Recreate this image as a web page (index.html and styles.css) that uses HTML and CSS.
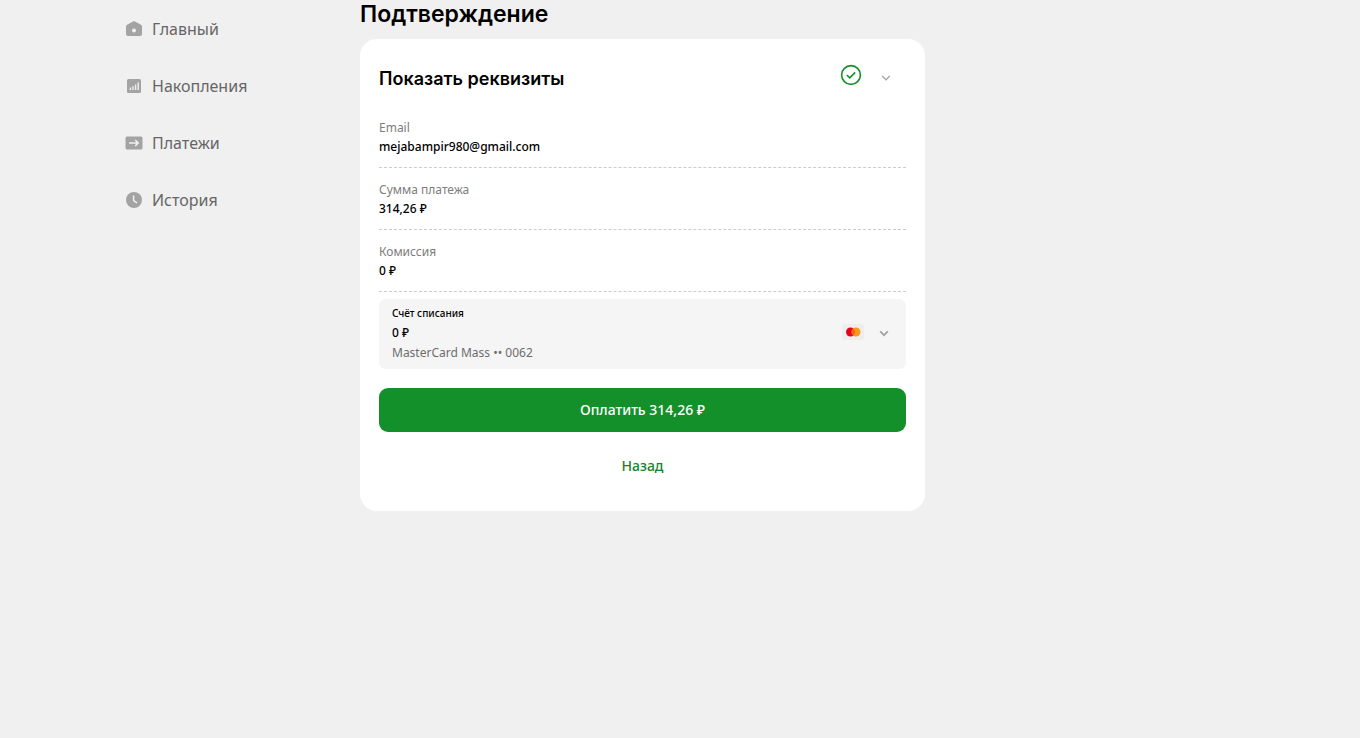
FILE: index.html
```html
<!DOCTYPE html>
<html lang="ru">
<head>
    <meta charset="UTF-8">
    <meta name="viewport" content="width=device-width, initial-scale=1">
    <title>Подтверждение</title>
    <link rel="stylesheet" href="styles.css">
</head>
<body>
<div class="container">
    <nav class="menu">
        <a class="menu_item" href="#">
            <svg class="menu_icon" viewBox="0 0 18 18">
                <path fill="#a3a3a3" fill-rule="evenodd" d="M9 1 16 4.8Q17 5.4 17 6.6V14Q17 16 15 16H3Q1 16 1 14V6.6Q1 5.4 2 4.8ZM9 8.4A2 2 0 1 0 9 12.4 2 2 0 1 0 9 8.4Z"/>
            </svg>
            <span>Главный</span>
        </a>
        <a class="menu_item" href="#">
            <svg class="menu_icon" viewBox="0 0 18 18">
                <rect x="2" y="2" width="14" height="14" rx="1.5" fill="#a3a3a3"/>
                <path stroke="#f0f0f0" stroke-width="1.4" d="M5.4 13V10.6M8 13V9.2M10.6 13V7.4M13.2 13V5.4"/>
            </svg>
            <span>Накопления</span>
        </a>
        <a class="menu_item" href="#">
            <svg class="menu_icon" viewBox="0 0 18 18">
                <rect x="0.5" y="2.5" width="17" height="13" rx="1.5" fill="#a3a3a3"/>
                <path fill="none" stroke="#f0f0f0" stroke-width="1.6" d="M4 9H13.2M10.2 6 13.2 9 10.2 12"/>
            </svg>
            <span>Платежи</span>
        </a>
        <a class="menu_item" href="#">
            <svg class="menu_icon" viewBox="0 0 18 18">
                <circle cx="9" cy="9" r="8" fill="#a3a3a3"/>
                <path fill="none" stroke="#f0f0f0" stroke-width="1.5" d="M8.6 4.4V9.6L12 11.8"/>
            </svg>
            <span>История</span>
        </a>
    </nav>
    <main class="content">
        <h1 class="title">Подтверждение</h1>
        <section class="card">
            <div class="card_head">
                <h2 class="card_title">Показать реквизиты</h2>
                <svg class="status_icon" viewBox="0 0 22 22">
                    <circle cx="11" cy="11" r="9.4" fill="none" stroke="#13902a" stroke-width="1.6"/>
                    <path fill="none" stroke="#13902a" stroke-width="1.6" d="M6.8 11 9.8 13.9 15.2 8.4"/>
                </svg>
                <button class="toggle_btn" type="button" aria-label="Показать реквизиты">
                    <svg class="arrow_icon" viewBox="0 0 10 10">
                        <path fill="none" stroke="#aaa" stroke-width="1.5" d="M1.2 3 5 6.8 8.8 3"/>
                    </svg>
                </button>
            </div>
            <dl class="details">
                <div class="row">
                    <dt>Email</dt>
                    <dd>mejabampir980@gmail.com</dd>
                </div>
                <div class="row">
                    <dt>Сумма платежа</dt>
                    <dd>314,26 ₽</dd>
                </div>
                <div class="row">
                    <dt>Комиссия</dt>
                    <dd>0 ₽</dd>
                </div>
            </dl>
            <button class="account" type="button" aria-haspopup="listbox">
                <span class="account_info">
                    <span class="account_label">Счёт списания</span>
                    <span class="account_sum">0 ₽</span>
                    <span class="account_card">MasterCard Mass •• 0062</span>
                </span>
                <svg class="card_icon" viewBox="0 0 22 16">
                    <rect width="22" height="16" rx="2" fill="#eeeeee"/>
                    <circle cx="8.5" cy="8" r="4.5" fill="#e8001c"/>
                    <circle cx="14" cy="8" r="4.5" fill="#f99a1c"/>
                    <path fill="#f4650f" d="M11.25 4.4A4.5 4.5 0 0 1 11.25 11.6 4.5 4.5 0 0 1 11.25 4.4Z"/>
                </svg>
                <svg class="arrow_icon" viewBox="0 0 10 10">
                    <path fill="none" stroke="#a3a3a3" stroke-width="1.8" d="M1.2 3.4 5 7.2 8.8 3.4"/>
                </svg>
            </button>
            <button class="pay_btn" type="button">Оплатить 314,26 ₽</button>
            <button class="back_btn" type="button">Назад</button>
        </section>
    </main>
</div>
</body>
</html>
```

FILE: styles.css
```css
* {
    box-sizing: border-box;
}

body {
    margin: 0;
    background: #f0f0f0;
    color: #000;
    font-family: "Noto Sans", sans-serif;
    font-size: 12px;
}

button {
    border: none;
    background: none;
    padding: 0;
    color: inherit;
    font-family: inherit;
    cursor: pointer;
}

svg {
    display: block;
    flex: none;
}

.container {
    display: grid;
    grid-template-columns: 235px minmax(0, 565px);
    max-width: 1110px;
    margin: 0 auto;
}

/* меню */
.menu {
    display: flex;
    flex-direction: column;
    gap: 33px;
    padding-top: 17px;
}

.menu_item {
    display: flex;
    align-items: center;
    gap: 9px;
    color: #666;
    font-size: 16px;
    line-height: 24px;
    text-decoration: none;
}

.menu_icon {
    width: 18px;
    height: 18px;
}

/* платёж */
.title {
    margin: 0 0 11px;
    font-family: Inter, sans-serif;
    font-size: 23px;
    font-weight: 600;
    line-height: 28px;
}

.card {
    padding: 19px 19px 23px;
    border-radius: 17px;
    background: #fff;
}

.card_head {
    display: flex;
    align-items: center;
    height: 40px;
    margin-bottom: 8px;
    padding-right: 15px;
}

.card_title {
    flex: 1;
    margin: 0;
    font-family: Inter, sans-serif;
    font-size: 18px;
    font-weight: 600;
}

.status_icon {
    width: 22px;
    height: 22px;
    margin: 0 19px 6px 0;
}

.arrow_icon {
    width: 10px;
    height: 10px;
}

.details {
    margin: 0 0 7px;
}

.row {
    padding: 12px 0 11px;
    border-bottom: 1px dashed #ccc;
    line-height: 19px;
}

.row dt {
    color: #7d7d7d;
}

.row dd {
    margin: 0;
    font-weight: 500;
}

.account {
    display: flex;
    align-items: center;
    width: 100%;
    padding: 4px 17px 6px 13px;
    border-radius: 7px;
    background: #f5f5f5;
    font-size: 12px;
    line-height: 20px;
    text-align: left;
}

.account_info {
    display: flex;
    flex: 1;
    flex-direction: column;
}

.account_label {
    font-size: 10px;
    font-weight: 500;
}

.account_sum {
    font-weight: 500;
}

.account_card {
    color: #6d6d6d;
}

.card_icon {
    width: 22px;
    height: 16px;
    margin: 0 15px 3px 0;
}

.pay_btn,
.back_btn {
    display: block;
    width: 100%;
    height: 44px;
    padding-bottom: 2px;
    border-radius: 9px;
    font-size: 14px;
    font-weight: 500;
}

.pay_btn {
    margin: 19px 0 12px;
    background: #13902a;
    color: #fff;
}

.back_btn {
    color: #13852a;
}
```
